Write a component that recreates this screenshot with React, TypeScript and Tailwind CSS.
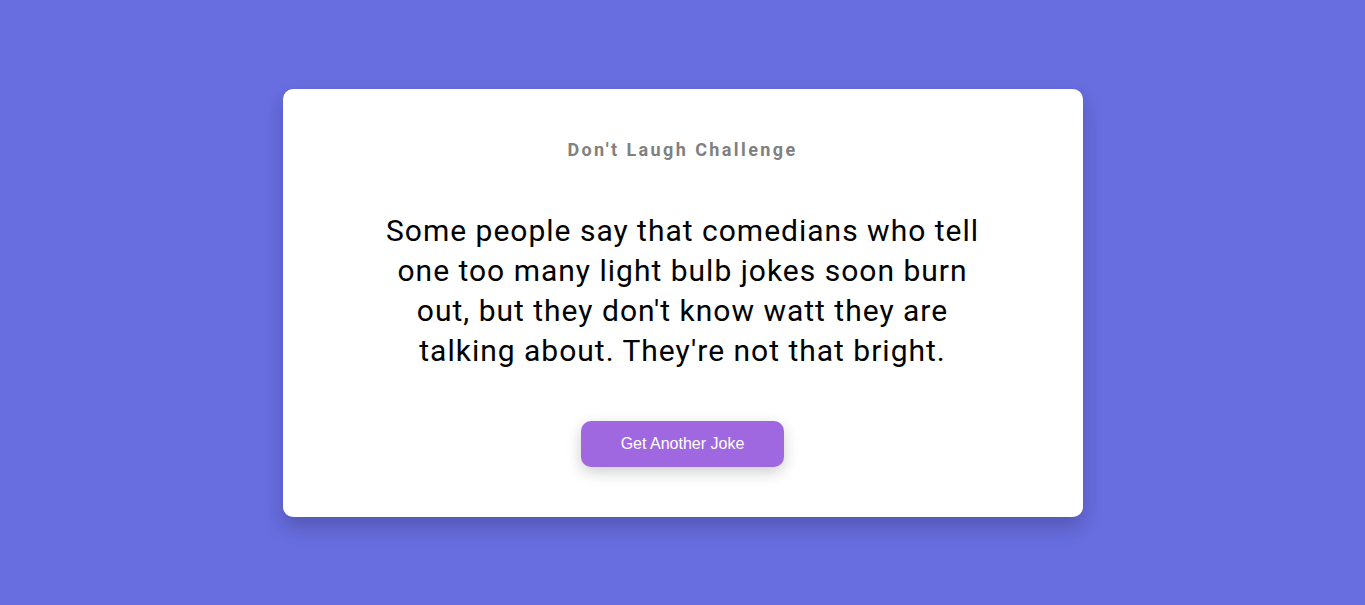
import React from "react";

export default function App() {
  return (
    <div className="flex h-[605px] w-full items-center justify-center bg-[#686de0] font-['Roboto',sans-serif]">
      <div className="flex h-[428px] w-[800px] flex-col items-center rounded-[10px] bg-white px-[100px] pt-[50px] text-center shadow-[0_10px_20px_rgba(0,0,0,0.2)]">
        {/* Title */}
        <h3 className="text-[18px] leading-[21px] font-bold tracking-[2.4px] text-[#808080]">
          Don't Laugh Challenge
        </h3>

        {/* Joke */}
        <p className="mt-[51px] text-[30px] leading-[40px] tracking-[1px] text-black">
          Some people say that comedians who tell one too many light bulb jokes soon burn out, but they
          don't know watt they are talking about. They're not that bright.
        </p>

        {/* Button */}
        <button className="mt-[50px] h-[46px] rounded-[10px] bg-[#9f68e0] px-10 font-['Liberation_Sans',Arial,sans-serif] text-[16px] text-white shadow-[0_5px_15px_rgba(0,0,0,0.2)]">
          Get Another Joke
        </button>
      </div>
    </div>
  );
}
